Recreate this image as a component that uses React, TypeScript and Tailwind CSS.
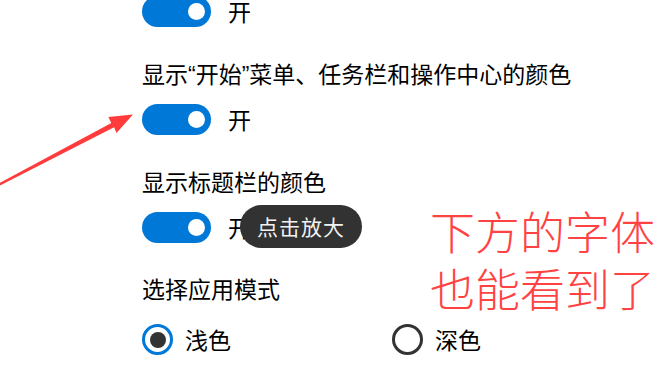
import React from 'react';

const font = { fontFamily: '"Noto Sans CJK SC", "Noto Sans", sans-serif' };

const Toggle: React.FC<{ label: string }> = ({ label }) => (
  <div className="flex items-center h-[31px]">
    <div className="w-[69px] h-[31px] rounded-full bg-[#0078d7] flex items-center justify-end pr-[6px]">
      <div className="w-[17px] h-[17px] rounded-full bg-white" />
    </div>
    <span className="ml-[17px] text-[23px] leading-[31px] text-black">{label}</span>
  </div>
);

const Radio: React.FC<{ label: string; checked?: boolean }> = ({ label, checked }) => (
  <div className="flex items-center w-[250px] h-[31px]">
    <div
      className={`w-[31px] h-[31px] rounded-full border-[3px] flex items-center justify-center ${
        checked ? 'border-[#0078d7]' : 'border-[#333333]'
      }`}
    >
      {checked && <div className="w-[16px] h-[16px] rounded-full bg-[#333333]" />}
    </div>
    <span className="ml-[12px] text-[23px] leading-[31px] text-black">{label}</span>
  </div>
);

// narrow (latin) quote marks, as in the screenshot
const Q: React.FC<{ c: string }> = ({ c }) => (
  <span style={{ fontFamily: '"Liberation Sans", Arial, sans-serif' }}>{c}</span>
);

export default function App() {
  return (
    <div lang="zh-CN" className="relative w-[667px] h-[369px] overflow-hidden bg-white" style={font}>
      {/* settings column */}
      <div className="flex flex-col pl-[142px] -mt-[4px]">
        <Toggle label="开" />
        <div className="mt-[31px] h-[30px] text-[23px] leading-[30px] text-black whitespace-nowrap">
          显示<Q c="“" />开始<Q c="”" />菜单、任务栏和操作中心的颜色
        </div>
        <div className="mt-[16px]">
          <Toggle label="开" />
        </div>
        <div className="mt-[31px] h-[30px] text-[23px] leading-[30px] text-black">显示标题栏的颜色</div>
        <div className="mt-[16px]">
          <Toggle label="开" />
        </div>
        <div className="mt-[30px] h-[30px] text-[23px] leading-[30px] text-black">选择应用模式</div>
        <div className="mt-[21px] flex">
          <Radio label="浅色" checked />
          <Radio label="深色" />
        </div>
      </div>

      {/* tooltip */}
      <div className="absolute left-[240px] top-[205px] w-[122px] h-[43px] rounded-full bg-[#323232] flex items-center justify-center">
        <span className="text-[21px] leading-none text-[#f2f2f2] tracking-[1px]">点击放大</span>
      </div>

      {/* annotation */}
      <div className="absolute left-[430px] top-[202px] text-[45px] leading-[57px] text-[#ff4343] font-light">
        <div>下方的字体</div>
        <div>也能看到了</div>
      </div>

      {/* arrow */}
      <svg className="absolute left-0 top-0" width="667" height="369" viewBox="0 0 667 369">
        <polygon
          points="-5,185.5 111.3,122.9 108.3,117.1 133,114.5 116.5,133.1 114.1,127.3 -5,188"
          fill="#ff3b3b"
        />
      </svg>
    </div>
  );
}
